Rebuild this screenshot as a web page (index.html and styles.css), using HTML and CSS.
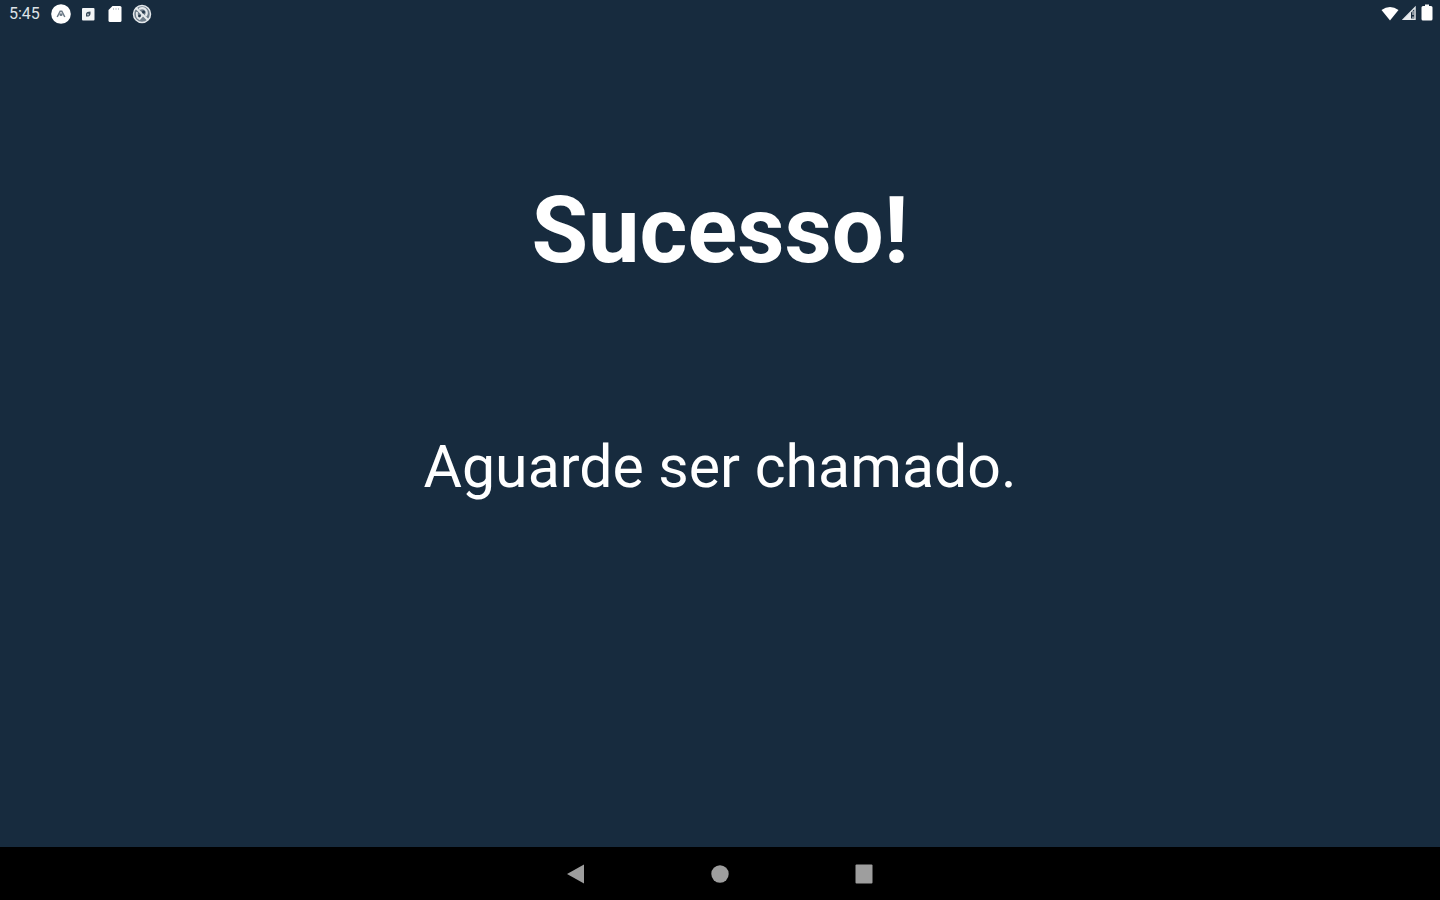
FILE: index.html
```
<!DOCTYPE html>
<html lang="pt-BR">
<head>
  <meta charset="UTF-8">
  <meta name="viewport" content="width=device-width, initial-scale=1.0">
  <title>Sucesso!</title>
  <link rel="stylesheet" href="styles.css">
</head>
<body>
  <header class="status-bar">
    <div class="status-left">
      <span class="clock">5:45</span>
      <svg width="20" height="20" viewBox="0 0 20 20" aria-hidden="true">
        <circle cx="10" cy="10" r="9.8" fill="#fff"/>
        <path d="M6.2 13 L9.2 7.2 H10.8 L13.8 13 M8.8 11.5 L10 10 L11.2 11.5" fill="none" stroke="#6b7986" stroke-width="1.5"/>
      </svg>
      <svg width="20" height="20" viewBox="0 0 20 20" aria-hidden="true">
        <rect x="4" y="4" width="12.5" height="12.5" rx="1" fill="#f4f6f7"/>
        <path d="M8 12.500 V9.500 Q8.500 7.500 12.500 7.500 V10 Q12 13 8 12.500 Z" fill="#3c4d5c"/>
        <circle cx="10" cy="10.500" r="1" fill="#b9c0c6"/>
      </svg>
      <svg width="20" height="20" viewBox="0 0 20 20" aria-hidden="true">
        <path d="M7.500 2 H15 Q16.500 2 16.500 3.500 V16.500 Q16.500 18 15 18 H5 Q3.500 18 3.500 16.500 V6 Z" fill="#fff"/>
        <path d="M8.500 4 V6 M11 4 V6 M13.500 4 V6" stroke="#c4cbd1" stroke-width="1"/>
      </svg>
      <svg width="20" height="20" viewBox="0 0 20 20" aria-hidden="true">
        <circle cx="10" cy="10" r="8.500" fill="#6f7e8b" stroke="#e4e8eb" stroke-width="1.500"/>
        <path d="M4 4 L16 16" stroke="#e9ecee" stroke-width="2"/>
        <path d="M7 5 Q12 2.500 14.500 7 Q15.500 10 13.500 12 M5 8 Q4 13 7.500 15 L10.500 11.500" fill="none" stroke="#e4e8eb" stroke-width="2"/>
        <circle cx="11.500" cy="8" r="1.500" fill="#26394b"/>
        <circle cx="7.500" cy="12" r="1.300" fill="#26394b"/>
      </svg>
    </div>
    <div class="status-right">
      <svg width="18" height="20" viewBox="0 0 18 20" aria-hidden="true">
        <path d="M0.500 6 Q9 0 17.500 6 L9 16.500 Z" fill="#fff"/>
      </svg>
      <svg width="16" height="20" viewBox="0 0 16 20" aria-hidden="true">
        <path d="M1.500 15.300 L13 3.500 V15.300 Z" fill="none" stroke="#dfe4e8" stroke-width="1.500"/>
        <path d="M1 16 L9 8 V16 Z" fill="#e9ecef"/>
        <path d="M11 7 V11 M11 12.500 V14.500" stroke="#aab3bb" stroke-width="1.500"/>
      </svg>
      <svg width="12" height="20" viewBox="0 0 12 20" aria-hidden="true">
        <path d="M4 0.500 H8 V2 H10 Q11.500 2 11.500 3.500 V15 Q11.500 16.500 10 16.500 H2 Q0.500 16.500 0.500 15 V3.500 Q0.500 2 2 2 H4 Z" fill="#fff"/>
      </svg>
    </div>
  </header>

  <main class="content">
    <h1>Sucesso!</h1>
    <p>Aguarde ser chamado.</p>
  </main>

  <nav class="nav-bar">
    <button type="button" aria-label="Voltar">
      <svg width="20" height="20" viewBox="0 0 20 20"><path d="M1 10 L18 0.500 V19.500 Z"/></svg>
    </button>
    <button type="button" aria-label="Início">
      <svg width="20" height="20" viewBox="0 0 20 20"><circle cx="10" cy="10" r="8.700"/></svg>
    </button>
    <button type="button" aria-label="Recentes">
      <svg width="20" height="20" viewBox="0 0 20 20"><rect x="1.500" y="0.500" width="17" height="19" rx="1"/></svg>
    </button>
  </nav>
</body>
</html>
```

FILE: styles.css
```
* {
  box-sizing: border-box;
}

body {
  margin: 0;
  min-height: 100vh;
  display: flex;
  flex-direction: column;
  background-color: #172b3e;
  color: #fff;
  font-family: Roboto, sans-serif;
}

svg {
  display: block;
}

.status-bar {
  display: flex;
  justify-content: space-between;
  align-items: center;
  height: 28px;
  padding: 0 7px 0 9px;
}

.status-left {
  display: flex;
  align-items: center;
  gap: 7px;
}

.clock {
  font-size: 16px;
  line-height: 20px;
  color: #dde2e6;
  margin-right: 4px;
}

.status-right {
  display: flex;
  align-items: center;
  gap: 3px;
}

.content {
  flex: 1;
  display: flex;
  flex-direction: column;
  align-items: center;
  padding: 147px 20px 40px;
  text-align: center;
}

h1 {
  margin: 0;
  font-size: 92px;
  line-height: 112px;
  font-weight: bold;
}

p {
  margin: 144px 0 0;
  font-size: 59px;
  line-height: 72px;
}

.nav-bar {
  display: flex;
  justify-content: center;
  align-items: center;
  gap: 96px;
  height: 53px;
  background-color: #000;
}

.nav-bar button {
  display: flex;
  justify-content: center;
  align-items: center;
  width: 48px;
  height: 48px;
  padding: 0;
  border: none;
  background: none;
  cursor: pointer;
}

.nav-bar svg {
  fill: #9e9e9e;
}
```
